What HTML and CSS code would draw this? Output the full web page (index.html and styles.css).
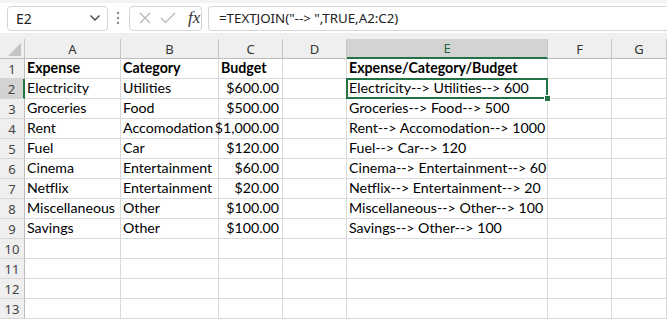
FILE: index.html
```html
<!DOCTYPE html>
<html lang="en">

<head>
    <meta charset="UTF-8">
    <meta name="viewport" content="width=device-width, initial-scale=1.0">
    <title>TEXTJOIN</title>
    <link rel="stylesheet" href="styles.css">
</head>

<body>
    <div class="topline"></div>
    <div class="formula-bar">
        <div class="name-box">
            <span>E2</span>
            <svg class="chevron" width="12" height="8" viewBox="0 0 12 8"><path d="M1.5 1.5 L6 6 L10.5 1.5" fill="none" stroke="#444" stroke-width="1.3"/></svg>
        </div>
        <svg class="grip" width="4" height="14" viewBox="0 0 4 14"><circle cx="2" cy="2" r="1.2" fill="#888"/><circle cx="2" cy="7" r="1.2" fill="#888"/><circle cx="2" cy="12" r="1.2" fill="#888"/></svg>
        <div class="fx-box">
            <svg width="12" height="12" viewBox="0 0 12 12"><path d="M1 1 L11 11 M11 1 L1 11" stroke="#b4b4b4" stroke-width="1.2"/></svg>
            <svg width="16" height="12" viewBox="0 0 16 12"><path d="M1 6 L5.5 10.5 L15 1" fill="none" stroke="#b4b4b4" stroke-width="1.2"/></svg>
            <span class="fx">fx</span>
        </div>
        <div class="formula-input">=TEXTJOIN("--&gt; ",TRUE,A2:C2)</div>
    </div>
    <div class="gap"></div>

    <div class="sheet">
        <div class="corner"></div>
        <div class="col-head">A</div>
        <div class="col-head">B</div>
        <div class="col-head">C</div>
        <div class="col-head">D</div>
        <div class="col-head active">E</div>
        <div class="col-head">F</div>
        <div class="col-head">G</div>

        <div class="row-head">1</div>
        <div class="cell bold">Expense</div>
        <div class="cell bold">Category</div>
        <div class="cell bold">Budget</div>
        <div class="cell"></div>
        <div class="cell bold">Expense/Category/Budget</div>
        <div class="cell"></div>
        <div class="cell"></div>

        <div class="row-head active">2</div>
        <div class="cell">Electricity</div>
        <div class="cell">Utilities</div>
        <div class="cell num">$600.00</div>
        <div class="cell"></div>
        <div class="cell selected">Electricity--&gt; Utilities--&gt; 600</div>
        <div class="cell"></div>
        <div class="cell"></div>

        <div class="row-head">3</div>
        <div class="cell">Groceries</div>
        <div class="cell">Food</div>
        <div class="cell num">$500.00</div>
        <div class="cell"></div>
        <div class="cell">Groceries--&gt; Food--&gt; 500</div>
        <div class="cell"></div>
        <div class="cell"></div>

        <div class="row-head">4</div>
        <div class="cell">Rent</div>
        <div class="cell">Accomodation</div>
        <div class="cell num">$1,000.00</div>
        <div class="cell"></div>
        <div class="cell">Rent--&gt; Accomodation--&gt; 1000</div>
        <div class="cell"></div>
        <div class="cell"></div>

        <div class="row-head">5</div>
        <div class="cell">Fuel</div>
        <div class="cell">Car</div>
        <div class="cell num">$120.00</div>
        <div class="cell"></div>
        <div class="cell">Fuel--&gt; Car--&gt; 120</div>
        <div class="cell"></div>
        <div class="cell"></div>

        <div class="row-head">6</div>
        <div class="cell">Cinema</div>
        <div class="cell">Entertainment</div>
        <div class="cell num">$60.00</div>
        <div class="cell"></div>
        <div class="cell">Cinema--&gt; Entertainment--&gt; 60</div>
        <div class="cell"></div>
        <div class="cell"></div>

        <div class="row-head">7</div>
        <div class="cell">Netflix</div>
        <div class="cell">Entertainment</div>
        <div class="cell num">$20.00</div>
        <div class="cell"></div>
        <div class="cell">Netflix--&gt; Entertainment--&gt; 20</div>
        <div class="cell"></div>
        <div class="cell"></div>

        <div class="row-head">8</div>
        <div class="cell">Miscellaneous</div>
        <div class="cell">Other</div>
        <div class="cell num">$100.00</div>
        <div class="cell"></div>
        <div class="cell">Miscellaneous--&gt; Other--&gt; 100</div>
        <div class="cell"></div>
        <div class="cell"></div>

        <div class="row-head">9</div>
        <div class="cell">Savings</div>
        <div class="cell">Other</div>
        <div class="cell num">$100.00</div>
        <div class="cell"></div>
        <div class="cell">Savings--&gt; Other--&gt; 100</div>
        <div class="cell"></div>
        <div class="cell"></div>

        <div class="row-head">10</div>
        <div class="cell"></div><div class="cell"></div><div class="cell"></div><div class="cell"></div>
        <div class="cell"></div><div class="cell"></div><div class="cell"></div>

        <div class="row-head">11</div>
        <div class="cell"></div><div class="cell"></div><div class="cell"></div><div class="cell"></div>
        <div class="cell"></div><div class="cell"></div><div class="cell"></div>

        <div class="row-head">12</div>
        <div class="cell"></div><div class="cell"></div><div class="cell"></div><div class="cell"></div>
        <div class="cell"></div><div class="cell"></div><div class="cell"></div>

        <div class="row-head">13</div>
        <div class="cell"></div><div class="cell"></div><div class="cell"></div><div class="cell"></div>
        <div class="cell"></div><div class="cell"></div><div class="cell"></div>
    </div>
</body>

</html>
```

FILE: styles.css
```css
body {
    margin: 0;
    background-color: #fff;
    font-family: "Noto Sans", sans-serif;
    color: #222;
    overflow: hidden;
}

.topline {
    height: 3px;
    background-color: #f3f3f3;
}

.formula-bar {
    display: flex;
    align-items: center;
    height: 30px;
    padding-left: 7px;
    box-sizing: border-box;
}

.name-box {
    display: flex;
    align-items: center;
    justify-content: space-between;
    width: 101px;
    height: 25px;
    padding: 0 6px 0 8px;
    border: 1px solid #d4d4d4;
    border-radius: 4px;
    box-sizing: border-box;
    font-size: 14px;
    color: #222;
}

.grip {
    margin: 0 9px 0 8px;
}

.fx-box {
    display: flex;
    align-items: center;
    gap: 9px;
    width: 73px;
    height: 25px;
    padding-left: 9px;
    border: 1px solid #d4d4d4;
    border-radius: 4px;
    box-sizing: border-box;
}

.fx {
    font-family: "Liberation Serif", serif;
    font-style: italic;
    font-size: 17px;
    color: #333;
    margin-left: 3px;
}

.formula-input {
    flex: 1;
    height: 25px;
    margin-left: 6px;
    padding-left: 10px;
    border: 1px solid #d4d4d4;
    border-right: none;
    border-radius: 4px 0 0 4px;
    box-sizing: border-box;
    font-size: 13.3px;
    line-height: 23px;
    color: #222;
}

.gap {
    height: 6px;
    background-color: #efefef;
}

.sheet {
    display: grid;
    grid-template-columns: 25px 96px 98px 64px 64px 201px 64px 1fr;
    grid-auto-rows: 20px;
    font-family: "Lato", sans-serif;
    font-size: 14.2px;
}

.corner {
    position: relative;
    background-color: #efefef;
    border-right: 1px solid #c6c6c6;
    border-bottom: 1px solid #bdbdbd;
}

.corner::after {
    content: "";
    position: absolute;
    right: 3px;
    bottom: 2px;
    border-left: 13px solid transparent;
    border-bottom: 13px solid #c4c4c4;
}

.col-head {
    display: flex;
    align-items: center;
    justify-content: center;
    background-color: #efefef;
    border-right: 1px solid #c6c6c6;
    border-bottom: 1px solid #bdbdbd;
    font-family: "Noto Sans", sans-serif;
    font-size: 13px;
    color: #333;
}

.col-head.active {
    background-color: #d3d3d3;
    color: #1e6b40;
    border-bottom: 2px solid #217346;
}

.row-head {
    display: flex;
    align-items: center;
    justify-content: center;
    background-color: #efefef;
    border-right: 1px solid #bdbdbd;
    border-bottom: 1px solid #d6d6d6;
    font-family: "Noto Sans", sans-serif;
    font-size: 13px;
    color: #444;
}

.row-head.active {
    background-color: #d3d3d3;
    border-right: 2px solid #217346;
}

.cell {
    display: flex;
    align-items: flex-end;
    padding: 0 3px 1px 2px;
    border-right: 1px solid #dadada;
    border-bottom: 1px solid #dadada;
    white-space: nowrap;
    line-height: 18px;
    color: #000;
}

.bold {
    font-weight: bold;
}

.num {
    justify-content: flex-end;
}

.selected {
    position: relative;
}

.selected::after {
    content: "";
    position: absolute;
    left: -1px;
    top: -1px;
    right: -1px;
    bottom: -1px;
    border: 2px solid #217346;
}

.selected::before {
    content: "";
    position: absolute;
    right: -4px;
    bottom: -4px;
    width: 5px;
    height: 5px;
    background-color: #217346;
    border: 1px solid #fff;
    z-index: 1;
}
```
